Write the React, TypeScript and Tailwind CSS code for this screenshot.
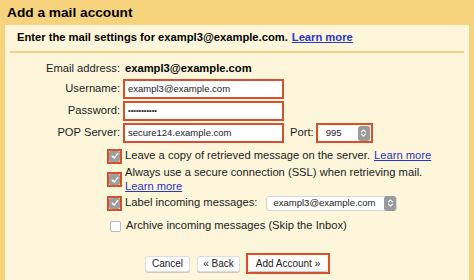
import React from "react";

const RED = "border-[#d4502e]";

function Check() {
  return (
    <span className="flex h-[11px] w-[11px] items-center justify-center rounded-[2px] bg-[#9e9e9e]">
      <svg width="8" height="8" viewBox="0 0 8 8" fill="none">
        <path d="M1.3 4.2 L3.2 6 L6.8 1.6" stroke="#fff" strokeWidth="1.4" strokeLinecap="round" strokeLinejoin="round" />
      </svg>
    </span>
  );
}

function Spinner() {
  return (
    <span className="flex h-[15px] w-[12px] items-center justify-center rounded-[3px] bg-[#9a9a9a]">
      <svg width="7" height="10" viewBox="0 0 7 10" fill="none">
        <path d="M1.5 3.8 L3.5 1.8 L5.5 3.8 M1.5 6.2 L3.5 8.2 L5.5 6.2" stroke="#fff" strokeWidth="1.1" strokeLinecap="round" strokeLinejoin="round" />
      </svg>
    </span>
  );
}

export default function App() {
  return (
    <div className="h-[280px] w-[474px] overflow-hidden bg-[#f6d37c] font-['Liberation_Sans',Arial,sans-serif] text-[11.2px] leading-none text-[#222]">
      {/* Title bar */}
      <div className="flex h-[25px] items-center pl-[7px] text-[13.7px] font-bold text-black">Add a mail account</div>

      <div className="mx-[5px] h-[255px] bg-[#fdf6da]">
        {/* Sub heading */}
        <div className="flex h-[26px] items-center pl-[12px] font-bold text-black">
          <span>Enter the mail settings for exampl3@example.com.</span>
          <a className="ml-[4px] text-[#2437d0] underline">Learn more</a>
        </div>
        <div className="mx-[5px] h-[2px] bg-[#efd486]" />

        {/* Fields */}
        <div className="mt-[7px] grid grid-cols-[115px_1fr] items-center gap-x-[3px]">
          <div className="flex h-[18px] items-center justify-end">Email address:</div>
          <div className="flex h-[18px] items-center pl-[2px] font-bold text-black">exampl3@example.com</div>

          <div className="flex h-[22px] items-center justify-end">Username:</div>
          <div className="flex h-[22px] items-center">
            <div className={`flex h-[20px] w-[161px] items-center border-2 ${RED} bg-white pl-[3px] text-[9.5px]`}>exampl3@example.com</div>
          </div>

          <div className="flex h-[22px] items-center justify-end">Password:</div>
          <div className="flex h-[22px] items-center">
            <div className={`flex h-[20px] w-[161px] items-center border-2 ${RED} bg-white pl-[3px] text-[7.5px]`}>•••••••••••</div>
          </div>

          <div className="flex h-[22px] items-center justify-end">POP Server:</div>
          <div className="flex h-[22px] items-center">
            <div className={`flex h-[20px] w-[161px] items-center border-2 ${RED} bg-white pl-[3px] text-[9.5px]`}>secure124.example.com</div>
            <span className="ml-[6px]">Port:</span>
            <div className={`ml-[2px] flex h-[20px] w-[57px] items-center justify-between border-2 ${RED} pl-[1px] pr-[1px]`}>
              <span className="flex h-[15px] flex-1 items-center rounded-l-[3px] bg-white pl-[7px] text-[9.5px]">995</span>
              <Spinner />
            </div>
          </div>
        </div>

        {/* Checkboxes */}
        <div className="mt-[4px] flex h-[16px] items-center pl-[102px]">
          <span className={`flex h-[15px] w-[15px] items-center justify-center border-2 ${RED}`}><Check /></span>
          <span className="ml-[3px]">Leave a copy of retrieved message on the server.</span>
          <a className="ml-[4px] text-[#2437d0] underline">Learn more</a>
        </div>

        <div className="mt-[2px] flex items-center pl-[102px]">
          <span className={`flex h-[15px] w-[15px] items-center justify-center border-2 ${RED}`}><Check /></span>
          <div className="ml-[3px] flex flex-col gap-[1px] leading-[13px]">
            <span>Always use a secure connection (SSL) when retrieving mail.</span>
            <a className="text-[#2437d0] underline">Learn more</a>
          </div>
        </div>

        <div className="mt-[1px] flex h-[18px] items-center pl-[102px]">
          <span className={`flex h-[15px] w-[15px] items-center justify-center border-2 ${RED}`}><Check /></span>
          <span className="ml-[3px]">Label incoming messages:</span>
          <div className="ml-[9px] flex h-[15px] w-[131px] items-center justify-between rounded-[3px] border border-[#d6d6d6] bg-white pl-[6px] text-[9.5px]">
            <span>exampl3@example.com</span>
            <Spinner />
          </div>
        </div>

        <div className="mt-[7px] flex h-[14px] items-center pl-[105px]">
          <span className="h-[11px] w-[11px] rounded-[2px] border border-[#b9b9b9] bg-white" />
          <span className="ml-[5px]">Archive incoming messages (Skip the Inbox)</span>
        </div>

        {/* Buttons */}
        <div className="mt-[20px] flex items-center pl-[140px] text-[10px]">
          <button className="flex h-[16px] w-[45px] items-center justify-center rounded-[3px] border border-[#dcdcdc] bg-white shadow-[0_1px_0_#c9c9c9]">Cancel</button>
          <button className="ml-[7px] flex h-[16px] w-[43px] items-center justify-center rounded-[3px] border border-[#dcdcdc] bg-white shadow-[0_1px_0_#c9c9c9]">« Back</button>
          <div className={`ml-[6px] flex h-[21px] w-[84px] items-center justify-center border-2 ${RED}`}>
            <button className="flex h-[15px] w-[78px] items-center justify-center rounded-[3px] bg-white shadow-[0_1px_0_#c9c9c9]">Add Account »</button>
          </div>
        </div>
      </div>
    </div>
  );
}
